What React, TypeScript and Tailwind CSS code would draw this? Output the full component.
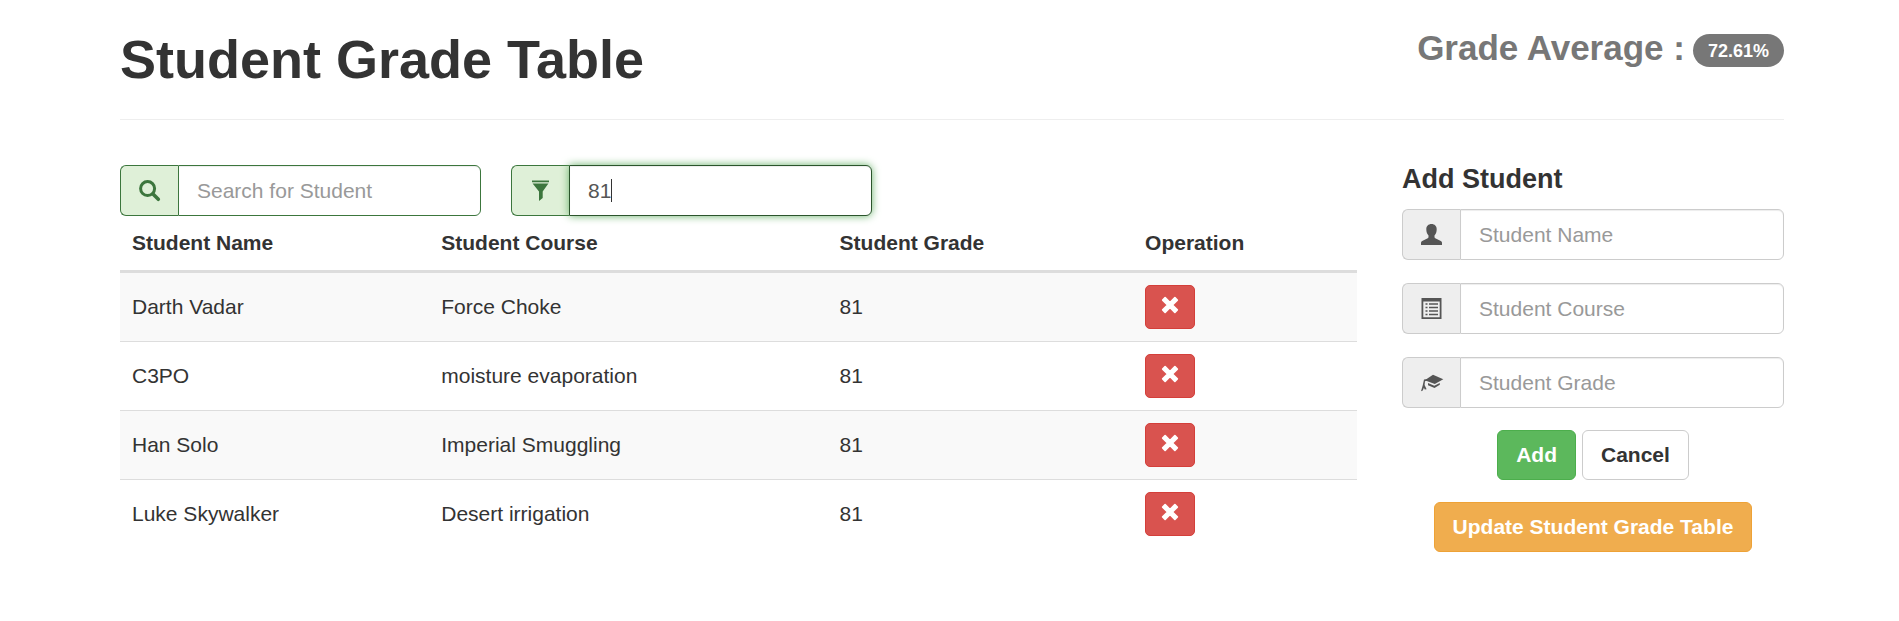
import { useEffect, useRef, type ReactNode } from "react";

const students = [
  { name: "Darth Vadar", course: "Force Choke", grade: 81 },
  { name: "C3PO", course: "moisture evaporation", grade: 81 },
  { name: "Han Solo", course: "Imperial Smuggling", grade: 81 },
  { name: "Luke Skywalker", course: "Desert irrigation", grade: 81 },
];

function Icon({ children, size = "size-[21px]" }: { children: ReactNode; size?: string }) {
  return (
    <svg viewBox="0 0 21 21" fill="currentColor" aria-hidden="true" className={`${size} shrink-0 overflow-visible`}>
      {children}
    </svg>
  );
}

const SearchIcon = () => (
  <Icon>
    <circle cx="8.6" cy="8.6" r="7" fill="none" stroke="currentColor" strokeWidth="3" />
    <path d="M14 14 19.300 19.300" stroke="currentColor" strokeWidth="3.600" strokeLinecap="round" />
  </Icon>
);

const FilterIcon = () => (
  <Icon>
    <path d="M2 0.500h17v1.700H2zM2.600 3.400h15.800L12.700 11.600v6.400L9 21v-9.400z" />
  </Icon>
);

const UserIcon = () => (
  <Icon>
    <path d="M10.500 0c3.200 0 5.200 2.100 5.200 5.200 0 2.800-.9 4.800-2.200 6.300v1.500c0 .6.300 1 .8 1.300l5.500 2.800c.8.400 1.200.9 1.200 1.700V21H0v-2.200c0-.8.400-1.300 1.200-1.700l5.500-2.800c.5-.3.8-.7.8-1.300v-1.500C6.200 10 5.300 8 5.300 5.200 5.300 2.100 7.300 0 10.500 0z" />
  </Icon>
);

const ListIcon = () => (
  <Icon>
    <path
      fillRule="evenodd"
      d="M.5 0h20v21H.5zM2.300 3.500v15.700h16.400V3.500zM4.500 5.300h2v1.500h-2zM8 5.300h9v1.500H8zM4.500 8.800h2v1.500h-2zM8 8.800h9v1.500H8zM4.500 12.300h2v1.500h-2zM8 12.300h9v1.500H8zM4.500 15.800h2v1.500h-2zM8 15.800h9v1.500H8z"
    />
  </Icon>
);

const GradeIcon = () => (
  <Icon>
    <path d="M12 2.700 22.300 7.200 13.800 12 3.800 8.300z" />
    <path d="M7 11l6.300 2.700L18.800 11v1.700l-5.300 3.300L7 13.300z" />
    <path d="M3 7.500 13 6.500 4 9.300 3.600 13 5.600 17.300 3.800 17.600 2.900 15.800 1.800 18.600 0 19.200 1.700 13.400z" />
  </Icon>
);

const RemoveIcon = () => (
  <Icon size="size-[18px]">
    <path d="M4.800 2 10.500 7.700 16.200 2 19 4.800 13.300 10.500 19 16.200 16.200 19 10.500 13.300 4.800 19 2 16.200 7.700 10.500 2 4.800z" stroke="currentColor" strokeWidth="2" strokeLinejoin="round" />
  </Icon>
);

type FieldProps = {
  id: string;
  label: string;
  icon: ReactNode;
  placeholder?: string;
  defaultValue?: string;
  success?: boolean;
  autoFocus?: boolean;
};

function Field({ id, label, icon, placeholder, defaultValue, success, autoFocus }: FieldProps) {
  const ref = useRef<HTMLInputElement>(null);

  useEffect(() => {
    if (autoFocus && ref.current) {
      const end = ref.current.value.length;
      ref.current.focus();
      ref.current.setSelectionRange(end, end);
    }
  }, [autoFocus]);

  const addon = success
    ? "border-[#3c763d] bg-[#dff0d8] text-[#3c763d]"
    : "border-[#ccc] bg-[#eee] text-[#555]";
  const input = success
    ? "border-[#3c763d] focus:border-[#2b542c] focus:shadow-[inset_0_1px_1px_rgba(0,0,0,0.075),0_0_9px_#67b168]"
    : "border-[#ccc] focus:border-[#66afe9]";

  return (
    <div className="relative flex h-[51px] min-w-0">
      <label htmlFor={id} className={`flex w-[58px] shrink-0 items-center justify-center rounded-l-md border border-r-0 ${addon}`}>
        {icon}
      </label>
      <input
        ref={ref}
        id={id}
        type="text"
        aria-label={label}
        placeholder={placeholder}
        defaultValue={defaultValue}
        className={`min-w-0 flex-1 rounded-r-md border bg-white px-[18px] text-[#555] caret-transparent shadow-[inset_0_1px_1px_rgba(0,0,0,0.075)] outline-none placeholder:text-[#999] ${input}`}
      />
      {autoFocus && <span aria-hidden="true" className="pointer-events-none absolute top-[14px] left-[100px] h-[23px] w-px bg-[#333]" />}
    </div>
  );
}

export default function App() {
  return (
    <div className="bg-white pr-[115px] pb-12 pl-[120px] font-['Liberation_Sans',Arial,sans-serif] text-[21px] leading-[30px] text-[#333]">
      <header className="flex items-start justify-between border-b border-[#eee] pt-[29px] pb-[29px]">
        <h1 className="text-[54px] leading-[61px] font-bold">Student Grade Table</h1>
        <p className="flex items-end gap-2 text-[35px] leading-[38px] font-bold text-[#777]">
          Grade Average :
          <span className="flex h-[33px] items-center rounded-full bg-[#777] px-[15px] text-[18px] leading-[18px] text-white">
            72.61%
          </span>
        </p>
      </header>

      <div className="mt-[45px] grid grid-cols-[minmax(0,1237fr)_minmax(0,382fr)] gap-x-[45px]">
        <main>
          <div className="grid grid-cols-[361px_361px] gap-[30px]">
            <Field id="search" label="Search for Student" icon={<SearchIcon />} placeholder="Search for Student" success />
            <Field id="filter" label="Filter by grade" icon={<FilterIcon />} defaultValue="81" success autoFocus />
          </div>

          <table className="w-full table-fixed border-separate border-spacing-0 text-left">
            <thead>
              <tr className="[&>th]:h-[57px] [&>th]:border-b-3 [&>th]:border-[#ddd] [&>th]:px-[12px]">
                <th className="w-[25%]">Student Name</th>
                <th className="w-[32.2%]">Student Course</th>
                <th className="w-[24.7%]">Student Grade</th>
                <th className="w-[18.1%]">Operation</th>
              </tr>
            </thead>
            <tbody>
              {students.map((student) => (
                <tr
                  key={student.name}
                  className="odd:bg-[#f9f9f9] [&>td]:h-[69px] [&>td]:border-b [&>td]:border-[#ddd] [&>td]:px-[12px] last:[&>td]:border-transparent"
                >
                  <td>{student.name}</td>
                  <td>{student.course}</td>
                  <td>{student.grade}</td>
                  <td>
                    <button
                      type="button"
                      aria-label={`Delete ${student.name}`}
                      className="flex h-[44px] w-[50px] items-center justify-center rounded-[5px] border border-[#d43f3a] bg-[#d9534f] pb-1 text-white"
                    >
                      <RemoveIcon />
                    </button>
                  </td>
                </tr>
              ))}
            </tbody>
          </table>
        </main>

        <form className="flex flex-col gap-[22px]" onSubmit={(event) => event.preventDefault()}>
          <div>
            <h2 className="pb-[16px] text-[27px] leading-[28px] font-bold">Add Student</h2>
            <div className="flex flex-col gap-[23px]">
              <Field id="name" label="Student Name" icon={<UserIcon />} placeholder="Student Name" />
              <Field id="course" label="Student Course" icon={<ListIcon />} placeholder="Student Course" />
              <Field id="grade" label="Student Grade" icon={<GradeIcon />} placeholder="Student Grade" />
            </div>
          </div>
          <div className="flex justify-center gap-[6px]">
            <button type="submit" className="h-[50px] rounded-md border border-[#4cae4c] bg-[#5cb85c] px-[18px] font-bold text-white">
              Add
            </button>
            <button type="reset" className="h-[50px] rounded-md border border-[#ccc] bg-white px-[18px] font-bold">
              Cancel
            </button>
          </div>
          <button type="button" className="h-[50px] self-center rounded-md border border-[#eea236] bg-[#f0ad4e] px-[18px] font-bold whitespace-nowrap text-white">
            Update Student Grade Table
          </button>
        </form>
      </div>
    </div>
  );
}
